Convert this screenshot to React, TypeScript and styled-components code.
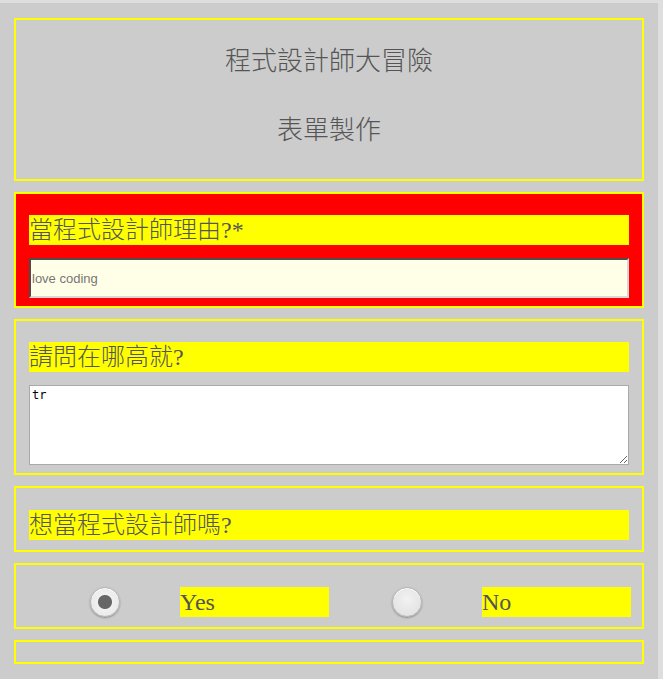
import styled, { createGlobalStyle } from "styled-components";

const GlobalStyle = createGlobalStyle`
  html, body {
    margin: 0;
    padding: 0;
    background: #dedede;
  }
  body {
    font-family: "Liberation Serif", "Noto Sans CJK TC", serif;
  }
`;

const Page = styled.form`
  width: 630px;
  background: #cccccc;
  margin-top: 3px;
  padding: 15px 14px 16px;
  display: flex;
  flex-direction: column;
  gap: 11px;
`;

const Section = styled.fieldset<{ $alert?: boolean; $loose?: boolean }>`
  margin: 0;
  border: 2px solid #ffff00;
  background: ${(p) => (p.$alert ? "#ff0000" : "transparent")};
  padding: ${(p) => (p.$loose ? "22px 13px 10px" : "21px 13px 8px")};
  display: flex;
  flex-direction: column;
  gap: 13px;
  min-width: 0;
`;

const Header = styled.header`
  border: 2px solid #ffff00;
  padding: 27px 0 33px;
  display: flex;
  flex-direction: column;
  align-items: center;
  gap: 39px;
`;

const Title = styled.h1`
  margin: 0;
  font-size: 26px;
  line-height: 30px;
  font-weight: 300;
  color: #555555;
`;

const Question = styled.label`
  display: block;
  background: #ffff00;
  color: #555555;
  font-size: 24px;
  font-weight: 300;
  line-height: 30px;
  height: 30px;
  overflow: hidden;
`;

const TextInput = styled.input`
  box-sizing: border-box;
  width: 100%;
  height: 40px;
  margin: 0;
  padding: 0 1px;
  background: #fffee6;
  border: 2px inset #a0a0a0;
  border-right-color: #d8d8d8;
  border-bottom-color: #d8d8d8;
  font-family: "Liberation Sans", Arial, sans-serif;
  font-size: 13px;
  &::placeholder {
    color: #777777;
  }
`;

const TextArea = styled.textarea`
  box-sizing: border-box;
  width: 100%;
  height: 80px;
  margin: 0;
  padding: 2px;
  background: #ffffff;
  border: 1px solid #a9a9a9;
  font-family: "DejaVu Sans Mono", monospace;
  font-size: 12px;
  color: #000000;
  display: block;
`;

const Choices = styled.div`
  border: 2px solid #ffff00;
  padding: 22px 13px 10px;
  display: grid;
  grid-template-columns: repeat(4, 151px);
  align-items: center;
`;

const RadioCell = styled.div`
  display: flex;
  justify-content: center;
`;

const Radio = styled.input`
  appearance: none;
  margin: 0;
  width: 30px;
  height: 30px;
  border-radius: 50%;
  border: 1px solid #b5b5b5;
  background: radial-gradient(circle at 50% 40%, #f2f2f2 0, #dedede 100%);
  box-shadow: 0 1px 2px rgba(0, 0, 0, 0.3), inset 0 1px 1px #fff;
  &:checked {
    background: radial-gradient(circle, #666666 0 6.5px, #f0f0f0 7.5px, #e6e6e6 100%);
  }
`;

const ChoiceLabel = styled.label`
  background: #ffff00;
  color: #555555;
  font-size: 24px;
  line-height: 30px;
  height: 30px;
  width: 149px;
`;

const Footer = styled.div`
  border: 2px solid #ffff00;
  height: 20px;
`;

export default function App() {
  return (
    <>
      <GlobalStyle />
      <Page onSubmit={(e) => e.preventDefault()}>
        <Header>
          <Title>程式設計師大冒險</Title>
          <Title>表單製作</Title>
        </Header>
        <Section $alert>
          <Question htmlFor="reason">當程式設計師理由?*</Question>
          <TextInput id="reason" type="text" placeholder="love coding" />
        </Section>
        <Section>
          <Question htmlFor="where">請問在哪高就?</Question>
          <TextArea id="where" defaultValue="tr" />
        </Section>
        <Section $loose>
          <Question>想當程式設計師嗎?</Question>
        </Section>
        <Choices>
          <RadioCell>
            <Radio type="radio" name="want" id="yes" defaultChecked />
          </RadioCell>
          <ChoiceLabel htmlFor="yes">Yes</ChoiceLabel>
          <RadioCell>
            <Radio type="radio" name="want" id="no" />
          </RadioCell>
          <ChoiceLabel htmlFor="no">No</ChoiceLabel>
        </Choices>
        <Footer />
      </Page>
    </>
  );
}
